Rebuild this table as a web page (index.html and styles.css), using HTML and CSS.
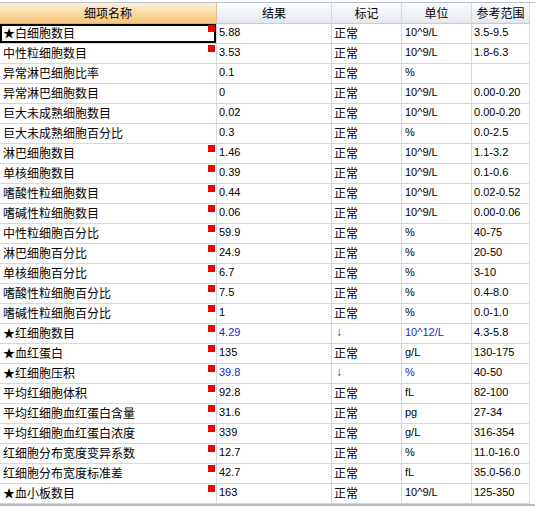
FILE: index.html
```html
<!DOCTYPE html>
<html lang="zh">
<head>
<meta charset="utf-8">
<link rel="stylesheet" href="styles.css">
</head>
<body>
<div class="grid">
  <div class="hd hd-sel">细项名称</div>
  <div class="hd">结果</div>
  <div class="hd">标记</div>
  <div class="hd">单位</div>
  <div class="hd">参考范围</div>

  <div class="c name sel">★白细胞数目<i class="flag"></i></div><div class="c num">5.88</div><div class="c cn">正常</div><div class="c num u">10^9/L</div><div class="c num">3.5-9.5</div>
  <div class="c name">中性粒细胞数目<i class="flag"></i></div><div class="c num">3.53</div><div class="c cn">正常</div><div class="c num u">10^9/L</div><div class="c num">1.8-6.3</div>
  <div class="c name">异常淋巴细胞比率</div><div class="c num">0.1</div><div class="c cn">正常</div><div class="c num u">%</div><div class="c num"></div>
  <div class="c name">异常淋巴细胞数目</div><div class="c num">0</div><div class="c cn">正常</div><div class="c num u">10^9/L</div><div class="c num">0.00-0.20</div>
  <div class="c name">巨大未成熟细胞数目</div><div class="c num">0.02</div><div class="c cn">正常</div><div class="c num u">10^9/L</div><div class="c num">0.00-0.20</div>
  <div class="c name">巨大未成熟细胞百分比</div><div class="c num">0.3</div><div class="c cn">正常</div><div class="c num u">%</div><div class="c num">0.0-2.5</div>
  <div class="c name">淋巴细胞数目<i class="flag"></i></div><div class="c num">1.46</div><div class="c cn">正常</div><div class="c num u">10^9/L</div><div class="c num">1.1-3.2</div>
  <div class="c name">单核细胞数目<i class="flag"></i></div><div class="c num">0.39</div><div class="c cn">正常</div><div class="c num u">10^9/L</div><div class="c num">0.1-0.6</div>
  <div class="c name">嗜酸性粒细胞数目<i class="flag"></i></div><div class="c num">0.44</div><div class="c cn">正常</div><div class="c num u">10^9/L</div><div class="c num">0.02-0.52</div>
  <div class="c name">嗜碱性粒细胞数目<i class="flag"></i></div><div class="c num">0.06</div><div class="c cn">正常</div><div class="c num u">10^9/L</div><div class="c num">0.00-0.06</div>
  <div class="c name">中性粒细胞百分比<i class="flag"></i></div><div class="c num">59.9</div><div class="c cn">正常</div><div class="c num u">%</div><div class="c num">40-75</div>
  <div class="c name">淋巴细胞百分比<i class="flag"></i></div><div class="c num">24.9</div><div class="c cn">正常</div><div class="c num u">%</div><div class="c num">20-50</div>
  <div class="c name">单核细胞百分比<i class="flag"></i></div><div class="c num">6.7</div><div class="c cn">正常</div><div class="c num u">%</div><div class="c num">3-10</div>
  <div class="c name">嗜酸性粒细胞百分比<i class="flag"></i></div><div class="c num">7.5</div><div class="c cn">正常</div><div class="c num u">%</div><div class="c num">0.4-8.0</div>
  <div class="c name">嗜碱性粒细胞百分比<i class="flag"></i></div><div class="c num">1</div><div class="c cn">正常</div><div class="c num u">%</div><div class="c num">0.0-1.0</div>
  <div class="c name">★红细胞数目<i class="flag"></i></div><div class="c num low">4.29</div><div class="c arrow low">↓</div><div class="c num u low">10^12/L</div><div class="c num">4.3-5.8</div>
  <div class="c name">★血红蛋白<i class="flag"></i></div><div class="c num">135</div><div class="c cn">正常</div><div class="c num u">g/L</div><div class="c num">130-175</div>
  <div class="c name">★红细胞压积<i class="flag"></i></div><div class="c num low">39.8</div><div class="c arrow low">↓</div><div class="c num u low">%</div><div class="c num">40-50</div>
  <div class="c name">平均红细胞体积<i class="flag"></i></div><div class="c num">92.8</div><div class="c cn">正常</div><div class="c num u">fL</div><div class="c num">82-100</div>
  <div class="c name">平均红细胞血红蛋白含量<i class="flag"></i></div><div class="c num">31.6</div><div class="c cn">正常</div><div class="c num u">pg</div><div class="c num">27-34</div>
  <div class="c name">平均红细胞血红蛋白浓度<i class="flag"></i></div><div class="c num">339</div><div class="c cn">正常</div><div class="c num u">g/L</div><div class="c num">316-354</div>
  <div class="c name">红细胞分布宽度变异系数<i class="flag"></i></div><div class="c num">12.7</div><div class="c cn">正常</div><div class="c num u">%</div><div class="c num">11.0-16.0</div>
  <div class="c name">红细胞分布宽度标准差<i class="flag"></i></div><div class="c num">42.7</div><div class="c cn">正常</div><div class="c num u">fL</div><div class="c num">35.0-56.0</div>
  <div class="c name">★血小板数目<i class="flag"></i></div><div class="c num">163</div><div class="c cn">正常</div><div class="c num u">10^9/L</div><div class="c num">125-350</div>
</div>
</body>
</html>
```

FILE: styles.css
```css
html, body {
  margin: 0;
  padding: 0;
  background: #ffffff;
}

body {
  padding-top: 2px;
  font-family: "Liberation Sans", "Noto Sans CJK SC", sans-serif;
  color: #000;
}

.grid {
  display: grid;
  grid-template-columns: 217px 115px 70px 70px 58px;
  width: 535px;
  border-top: 1px solid #b9c0ca;
  border-bottom: 2px solid #b4bac4;
}

.hd {
  height: 20px;
  line-height: 20px;
  text-align: center;
  font-family: "Noto Sans CJK SC", sans-serif;
  font-size: 12px;
  background: linear-gradient(to bottom, #fbfcfd 0%, #f1f3f6 50%, #e4e8ee 100%);
  border-right: 1px solid #d5dae2;
  border-bottom: 1px solid #c5ccd6;
  white-space: nowrap;
}

.hd-sel {
  background: linear-gradient(to bottom, #fdf0d8 0%, #fbdca8 45%, #f7c57c 100%);
  border-right-color: #e5c28e;
  border-bottom-color: #d9b57a;
}

.c {
  position: relative;
  height: 20px;
  line-height: 17px;
  padding: 0 0 2px 2px;
  box-sizing: border-box;
  border-right: 1px solid #d3d8e0;
  border-bottom: 1px solid #d3d8e0;
  white-space: nowrap;
  overflow: hidden;
}

.name {
  padding-left: 3px;
  font-family: "Noto Sans CJK SC", sans-serif;
  font-size: 12px;
}

.cn {
  font-family: "Noto Sans CJK SC", sans-serif;
  font-size: 12px;
}

.num {
  font-family: "Liberation Sans", sans-serif;
  font-size: 11px;
}

.u {
  padding-left: 3px;
}

.arrow {
  font-family: "Liberation Sans", sans-serif;
  font-size: 12px;
  padding-left: 4px;
}

.low {
  color: #2424c8;
}

.sel {
  box-shadow: inset 0 0 0 2px #000;
}

.flag {
  position: absolute;
  top: 1px;
  right: 1px;
  width: 7px;
  height: 7px;
  background: #f00000;
}
```
